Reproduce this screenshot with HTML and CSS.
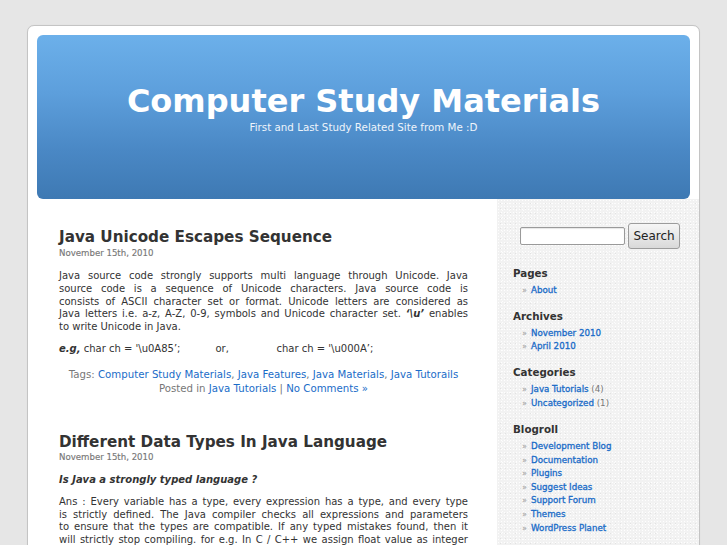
FILE: index.html
```html
<!DOCTYPE html>
<html lang="en">
<head>
<meta charset="utf-8">
<title>Computer Study Materials</title>
<link rel="stylesheet" href="styles.css">
</head>
<body>
<div class="page">
  <header class="header">
    <h1 class="site-title">Computer Study Materials</h1>
    <div class="site-desc">First and Last Study Related Site from Me :D</div>
  </header>
  <div class="columns">
    <main class="main">
      <article class="post">
        <h2 class="post-title">Java Unicode Escapes Sequence</h2>
        <div class="post-date">November 15th, 2010</div>
        <p class="entry">
          <span class="line">Java source code strongly supports multi language through Unicode. Java</span>
          <span class="line">source code is a sequence of Unicode characters. Java source code is</span>
          <span class="line">consists of ASCII character set or format. Unicode letters are considered as</span>
          <span class="line">Java letters i.e. a-z, A-Z, 0-9, symbols and Unicode character set. <b><i>‘\u’</i></b> enables</span>
          to write Unicode in Java.
        </p>
        <p class="entry code-line"><b><i>e.g,</i></b> char ch = '\u0A85’;&nbsp;&nbsp;&nbsp;&nbsp;&nbsp;&nbsp;&nbsp;&nbsp;&nbsp;&nbsp; or,&nbsp;&nbsp;&nbsp;&nbsp;&nbsp;&nbsp;&nbsp;&nbsp;&nbsp;&nbsp;&nbsp;&nbsp;&nbsp;&nbsp; char ch = '\u000A’;</p>
        <div class="post-meta">
          <div>Tags: <a href="#">Computer Study Materials</a>, <a href="#">Java Features</a>, <a href="#">Java Materials</a>, <a href="#">Java Tutorails</a></div>
          <div>Posted in <a href="#">Java Tutorials</a> | <a href="#">No Comments »</a></div>
        </div>
      </article>
      <article class="post post-second">
        <h2 class="post-title">Different Data Types In Java Language</h2>
        <div class="post-date">November 15th, 2010</div>
        <p class="entry question"><b><i>Is Java a strongly typed language ?</i></b></p>
        <p class="entry answer">
          <span class="line">Ans : Every variable has a type, every expression has a type, and every type</span>
          <span class="line">is strictly defined. The Java compiler checks all expressions and parameters</span>
          <span class="line">to ensure that the types are compatible. If any typed mistakes found, then it</span>
          <span class="line">will strictly stop compiling. for e.g. In C / C++ we assign float value as integer</span>
          variable then it will automatically convert it, but in Java it is not allowed.
        </p>
      </article>
    </main>
    <aside class="sidebar">
      <form class="search" onsubmit="return false">
        <input class="search-input" type="text" aria-label="Search">
        <button class="search-btn" type="submit">Search</button>
      </form>
      <section class="widget">
        <h3 class="widget-title">Pages</h3>
        <ul class="widget-list">
          <li><a href="#">About</a></li>
        </ul>
      </section>
      <section class="widget">
        <h3 class="widget-title">Archives</h3>
        <ul class="widget-list">
          <li><a href="#">November 2010</a></li>
          <li><a href="#">April 2010</a></li>
        </ul>
      </section>
      <section class="widget">
        <h3 class="widget-title">Categories</h3>
        <ul class="widget-list">
          <li><a href="#">Java Tutorials</a> <span class="count">(4)</span></li>
          <li><a href="#">Uncategorized</a> <span class="count">(1)</span></li>
        </ul>
      </section>
      <section class="widget">
        <h3 class="widget-title">Blogroll</h3>
        <ul class="widget-list">
          <li><a href="#">Development Blog</a></li>
          <li><a href="#">Documentation</a></li>
          <li><a href="#">Plugins</a></li>
          <li><a href="#">Suggest Ideas</a></li>
          <li><a href="#">Support Forum</a></li>
          <li><a href="#">Themes</a></li>
          <li><a href="#">WordPress Planet</a></li>
        </ul>
      </section>
    </aside>
  </div>
</div>
</body>
</html>
```
FILE: styles.css
```css
html, body {
  margin: 0;
  padding: 0;
}
body {
  background: #e6e6e6;
  font-family: "DejaVu Sans", Verdana, sans-serif;
  color: #333;
  overflow: hidden;
  height: 545px;
}
a {
  color: #1a6cc8;
  text-decoration: none;
}
.page {
  margin: 25px 0 0 27px;
  width: 671px;
  min-height: 600px;
  background: #fff;
  border: 1px solid #c4c4c4;
  border-radius: 7px;
  box-shadow: 0 0 1px rgba(0,0,0,0.08);
}
.header {
  margin: 9px 9px 0 9px;
  height: 164px;
  border-radius: 6px;
  background: linear-gradient(#6cb0ea 0%, #5d9fdc 35%, #4a88c5 70%, #3e79b3 100%);
  text-align: center;
  color: #fff;
  box-sizing: border-box;
  padding-top: 49px;
}
.site-title {
  margin: 0;
  font-size: 32px;
  font-weight: bold;
  line-height: 34px;
}
.site-desc {
  margin-top: 3px;
  font-size: 10.3px;
  line-height: 12px;
  color: #eef4fb;
}
.columns {
  display: flex;
  align-items: stretch;
}
.main {
  width: 409px;
  margin: 0 29px 0 31px;
  padding-top: 29px;
}
.post-title {
  margin: 0;
  font-size: 15.2px;
  line-height: 18px;
  font-weight: bold;
  color: #333;
}
.post-date {
  margin-top: 1.5px;
  font-size: 8.6px;
  line-height: 11px;
  color: #777;
  -webkit-text-stroke: 0.15px #777;
}
.entry {
  margin: 11.5px 0 0 0;
  font-size: 10px;
  line-height: 12.75px;
  text-align: justify;
  color: #333;
}
.line {
  display: block;
  text-align: justify;
  text-align-last: justify;
}
.code-line {
  margin-top: 9.5px;
  text-align: left;
}
.post-meta {
  margin-top: 11.5px;
  text-align: center;
  font-size: 10.2px;
  line-height: 14px;
  color: #777;
}
.post-second {
  margin-top: 37px;
}
.question {
  margin-top: 11px;
}
.answer {
  margin-top: 9.2px;
}
.sidebar {
  flex: 1;
  min-height: 400px;
  padding: 24px 0 0 16px;
  background-color: #f2f2f2;
  background-image:
    radial-gradient(rgba(255,255,255,0.9) 0.6px, transparent 0.9px),
    radial-gradient(#e2e2e2 0.6px, transparent 0.9px),
    radial-gradient(rgba(255,255,255,0.8) 0.6px, transparent 0.9px);
  background-size: 3px 3px, 5px 5px, 7px 7px;
  background-position: 0 0, 1px 2px, 2px 1px;
}
.search {
  display: flex;
  align-items: center;
  margin: 0 0 0 7px;
}
.search-input {
  width: 105px;
  height: 18px;
  box-sizing: border-box;
  border: 1px solid #9a9a9a;
  border-radius: 2px;
  background: #fff;
  padding: 0;
  margin: 0;
  box-shadow: inset 0 1px 1px rgba(0,0,0,0.1);
}
.search-btn {
  margin-left: 3px;
  width: 52px;
  height: 26px;
  box-sizing: border-box;
  border: 1px solid #9c9c9c;
  border-radius: 3px;
  background: linear-gradient(#f6f6f6, #d9d9d9);
  font-family: "DejaVu Sans", Verdana, sans-serif;
  font-size: 12px;
  color: #222;
  padding: 0;
}
.widget {
  margin-top: 12.3px;
}
.widget:first-of-type {
  margin-top: 17.5px;
}
.widget-title {
  margin: 0;
  font-size: 10.3px;
  line-height: 13px;
  font-weight: bold;
  color: #333;
}
.widget-list {
  list-style: none;
  margin: 4.2px 0 0 0;
  padding: 0 0 0 9px;
  font-size: 8.7px;
  line-height: 13.6px;
}
.widget-list li::before {
  content: "»";
  color: #999;
  font-size: 8px;
  display: inline-block;
  width: 9px;
}
.widget-list a {
  color: #1a6cc8;
  -webkit-text-stroke: 0.3px #1a6cc8;
}
.count {
  color: #777;
}
```
